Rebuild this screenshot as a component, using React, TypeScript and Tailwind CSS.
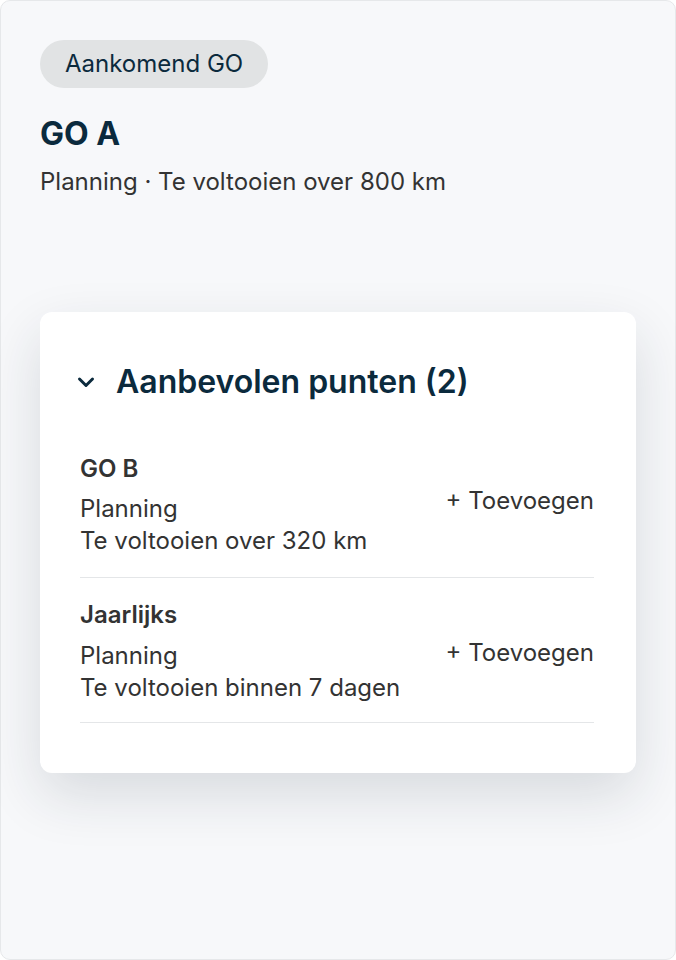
import React from "react";

function Chevron() {
  return (
    <svg width="20" height="20" viewBox="0 0 20 20" fill="none" className="shrink-0 -ml-[4px]">
      <path d="M3.5 7 L10 13.5 L16.5 7" stroke="#0b2a3d" strokeWidth="3" strokeLinecap="round" strokeLinejoin="round" />
    </svg>
  );
}

function Item({
  title,
  line1,
  line2,
  second,
}: {
  title: string;
  line1: string;
  line2: string;
  second?: boolean;
}) {
  return (
    <div
      className={
        second
          ? "flex items-center justify-between border-b border-[#e4e6e8] pt-[21px] pb-[18px]"
          : "flex items-center justify-between border-b border-[#e4e6e8] pt-[20px] pb-[20px]"
      }
    >
      <div className="flex flex-col">
        <div className="text-[24px] leading-[32px] font-semibold text-[#333333]">{title}</div>
        <div className={second ? "mt-[9px] text-[24px] leading-[32px] text-[#333333]" : "mt-[8px] text-[24px] leading-[32px] text-[#333333]"}>
          {line1}
        </div>
        <div className="text-[24px] leading-[32px] text-[#333333]">{line2}</div>
      </div>
      <div className={second ? "text-[24px] leading-[32px] text-[#333333] mt-[2px]" : "text-[24px] leading-[32px] text-[#333333] mb-[8px]"}>
        + Toevoegen
      </div>
    </div>
  );
}

export default function App() {
  return (
    <div
      className="w-[676px] h-[960px] box-border border border-[#e6e8ea] rounded-[10px] bg-[#f7f8fa] px-[39px] pt-[39px]"
      style={{ fontFamily: "Inter, 'Noto Sans', sans-serif" }}
    >
      <div className="inline-flex items-center h-[48px] px-[25px] rounded-full bg-[#e1e3e4] text-[24px] text-[#0b2a3d]">
        Aankomend GO
      </div>
      <div className="mt-[26px] text-[32px] leading-[40px] font-bold text-[#0b2a3d]">GO A</div>
      <div className="mt-[12px] text-[24px] leading-[32px] text-[#333333]">
        Planning · Te voltooien over 800 km
      </div>
      <div className="mt-[114px] bg-white rounded-[12px] shadow-[0_22px_56px_rgba(30,45,60,0.14)] pl-[40px] pr-[42px] pt-[50px] pb-[50px]">
        <div className="flex items-center gap-[20px] h-[40px]">
          <Chevron />
          <div className="text-[32px] leading-[40px] font-semibold text-[#0b2a3d]">Aanbevolen punten (2)</div>
        </div>
        <div className="mt-[31px]">
          <Item title="GO B" line1="Planning" line2="Te voltooien over 320 km" />
          <Item title="Jaarlijks" line1="Planning" line2="Te voltooien binnen 7 dagen" second />
        </div>
      </div>
    </div>
  );
}
